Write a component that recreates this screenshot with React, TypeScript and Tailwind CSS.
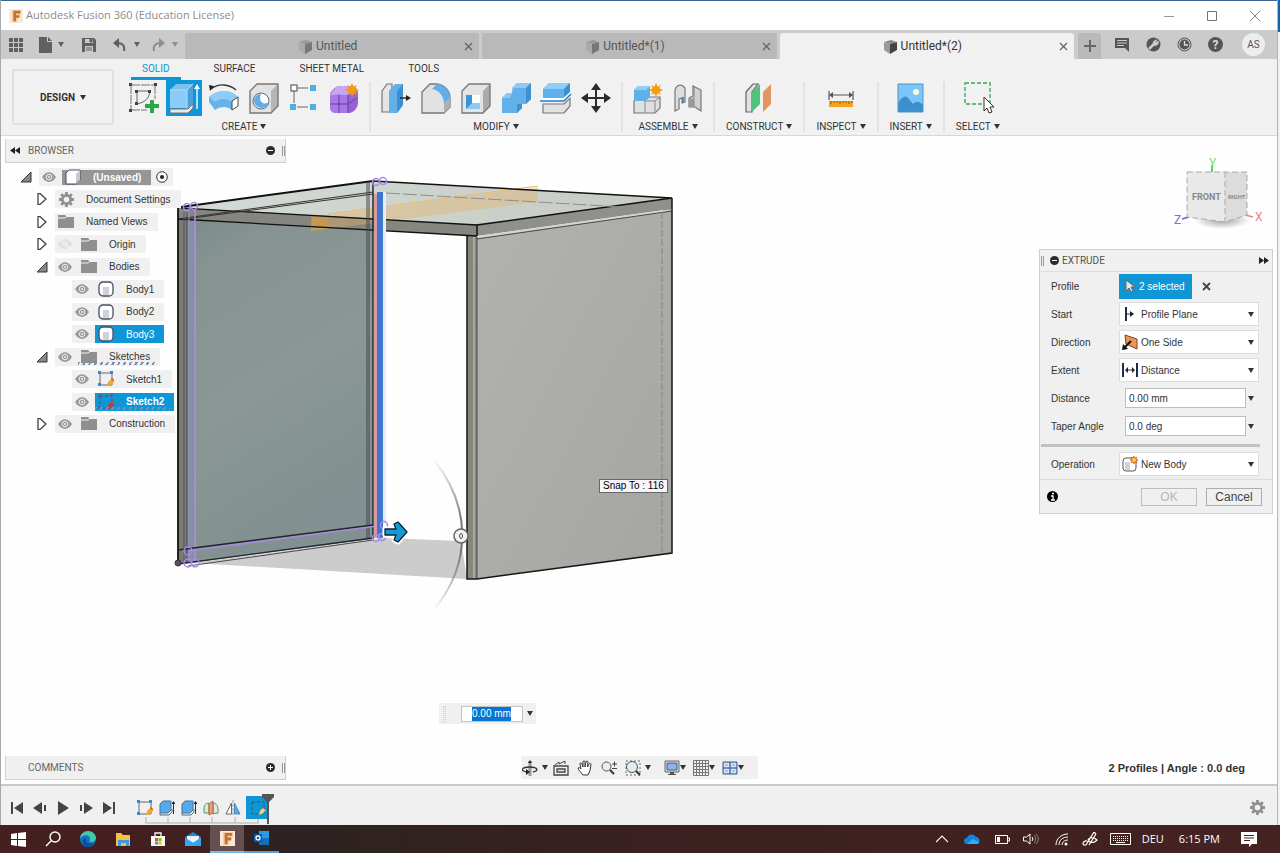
import type { ReactNode } from "react";

type IconProps = { children: ReactNode; w?: number; h?: number; box?: string };

function Icon({ children, w = 32, h = 32, box }: IconProps) {
  return (
    <svg width={w} height={h} viewBox={box ?? `0 0 ${w} ${h}`} fill="none" className="shrink-0" aria-hidden="true">
      {children}
    </svg>
  );
}

function Caret({ color = "#333" }: { color?: string }) {
  return (
    <Icon w={6} h={5}>
      <path d="M0 0h6L3 5z" fill={color} />
    </Icon>
  );
}

/* ---------- ribbon icons ---------- */

const spark = "M0-7 1.7-3.3 5-5 3.3-1.7 7 0 3.3 1.7 5 5 1.7 3.3 0 7-1.7 3.3-5 5-3.3 1.7-7 0-3.3-1.7-5-5-1.7-3.3z";

const SketchIcon = () => (
  <Icon>
    <path d="M3 3h24M3 3v25M27 3v14M3 28h16" stroke="#777" strokeDasharray="9 1" />
    <path d="M9 9h13M9 9v13M9 22c9-2 12-6 13-13" stroke="#666" />
    <path d="M1 1h3v3H1zM26 1h3v3h-3zM1 27h3v3H1zM7 8h3v3H7zM20 8h3v3h-3zM7 20h3v3H7z" fill="#444" />
    <path d="M22 18h4v4h5v4h-5v5h-4v-5h-5v-4h5z" fill="#27a84a" />
  </Icon>
);

const ExtrudeIcon = () => (
  <Icon>
    <path d="M2 8 8 2h17v19l-5 5H2z" fill="#7cc0f2" />
    <path d="M2 8h17v18H2z" fill="#8accf7" />
    <path d="m19 8 6-6v19l-6 5z" fill="#4b9fdd" />
    <path d="M2 8h17v19M19 8l6-6" stroke="#a9dcff" />
    <path d="M2 27h18l5-5v4l-5 5H2z" fill="#e8e8e8" stroke="#777" />
    <path d="M29 27V6" stroke="#e7f6ff" strokeWidth="1.5" />
    <path d="m29 2 3 5h-6z" fill="#fff" />
  </Icon>
);

const RevolveIcon = () => (
  <Icon>
    <path d="M1 15c8-8 22-8 29 0v6l-6 7c-5-4-12-4-17 0l-6-8z" fill="#66b2ea" />
    <path d="M1 15c8-8 22-8 29 0l-6 5c-5-4-12-4-17 0z" fill="#8ecbf5" />
    <path d="m24 19 6-4v9l-6 4z" fill="#fff" stroke="#444" />
    <path d="M3 7C11 1 21 2 28 8" stroke="#333" strokeWidth="1.3" />
    <path d="m1 3 5 1-4 5z" fill="#222" />
  </Icon>
);

const HoleIcon = () => (
  <Icon>
    <path d="M2 9 9 2h21v22l-7 7H2z" fill="#e2e2e2" />
    <path d="m23 9 7-7v22l-7 7z" fill="#b5b5b5" />
    <path d="M2 9 9 2h21v22l-7 7H2z" stroke="#777" strokeWidth="1.4" />
    <circle cx="13" cy="19" r="8" fill="#fff" stroke="#666" />
    <path d="M13 12c-3 7 2 12 8 8-1 8-14 8-15-1 0-4 3-7 7-7z" fill="#5facea" />
  </Icon>
);

const PatternIcon = () => (
  <Icon>
    <path d="M9 6h11M6 9v12M9 25h11" stroke="#666" />
    <rect x="3" y="3" width="6" height="6" fill="#fff" stroke="#444" />
    <path d="M22 3h6v6h-6zM2 22h6v6H2zM22 22h6v6h-6z" fill="#55aae8" />
  </Icon>
);

const FormIcon = () => (
  <Icon>
    <path d="M2 13c0-3 5-9 10-9h11c5 0 7 4 7 9v8c0 5-5 10-9 10H8c-4 0-6-3-6-6z" fill="#9862d6" />
    <path d="M2 14c1-4 6-10 10-10h11c2 0 3 1 3 2-1 3-4 6-6 7z" fill="#c6a5f3" />
    <path d="M2 14c2-2 16-2 18 0v17H8c-4 0-6-3-6-6z" fill="#aa78e6" />
    <path d="M2 22h18l9-6M11 13v18M20 13v18" stroke="#663d9b" />
    <path d={spark} transform="translate(24 8)" fill="#f59b0a" />
  </Icon>
);

const PressPullIcon = () => (
  <Icon>
    <path d="M2 9 7 2h5v28H2z" fill="#e5e5e5" stroke="#777" strokeWidth="1.2" />
    <path d="m9 9 6-7h8v21l-6 8H9z" fill="#61b0ea" />
    <path d="m17 9 6-7v21l-6 8z" fill="#3d8fce" />
    <path d="M20 16h7" stroke="#222" strokeWidth="1.4" />
    <path d="m26 13 5 3-5 3z" fill="#222" />
  </Icon>
);

const FilletIcon = () => (
  <Icon>
    <path d="M2 10 10 2h6c9 1 14 7 14 14v9l-6 6H2z" fill="#e2e2e2" stroke="#777" strokeWidth="1.3" />
    <path d="M24 22v9l6-6v-9z" fill="#b0b0b0" />
    <path d="M12 7 17 2c8 1 13 7 13 14l-6 6c0-8-5-14-12-15z" fill="#60afe9" />
  </Icon>
);

const ShellIcon = () => (
  <Icon>
    <path d="M2 9 9 2h21v22l-7 7H2z" fill="#e4e4e4" />
    <path d="m23 9 7-7v22l-7 7z" fill="#aaa" />
    <path d="M2 9 9 2h21v22l-7 7H2z" stroke="#777" strokeWidth="1.3" />
    <path d="M6 13h14v14H6z" fill="#fff" />
    <path d="M6 13h6v14H6z" fill="#3c93d6" />
    <path d="m6 27 6-6h8v6z" fill="#8bcaf7" />
  </Icon>
);

const CombineIcon = () => (
  <Icon>
    <path d="M2 16 7 11h5V6l5-5h14v16l-5 5h-4v4l-5 5H2z" fill="#62b0e9" />
    <path d="m2 16 5-5h5V6l5-5h14l-5 5H14l-2 5-2 5z" fill="#8bcaf5" />
    <path d="m26 6 5-5v16l-5 5zM17 22h5v4l-5 5z" fill="#3f91d0" />
  </Icon>
);

const SplitIcon = () => (
  <Icon>
    <path d="M3 7 9 1h21v9l-6 6H3z" fill="#60b0ea" />
    <path d="m3 7 6-6h21l-6 6z" fill="#91cef7" />
    <path d="m24 7 6-6v9l-6 6z" fill="#3d8fce" />
    <path d="M3 22h21l6-6v8l-6 7H3z" fill="#e2e2e2" stroke="#777" strokeWidth="1.2" />
    <path d="M0 18h24l7-6" stroke="#fff" strokeWidth="4" />
    <path d="M0 19h24l7-7" stroke="#1681cd" strokeWidth="1.5" />
  </Icon>
);

const MoveIcon = () => (
  <Icon>
    <path d="M16 5v22M5 16h22" stroke="#2b2b2b" strokeWidth="2" />
    <path d="m16 1 5 7H11zM16 31l5-7H11zM1 16l7-5v10zM31 16l-7-5v10z" fill="#2b2b2b" />
  </Icon>
);

const ComponentIcon = () => (
  <Icon>
    <path d="m2 19 4-4h22v11l-5 5H2z" fill="#e0e0e0" stroke="#777" strokeWidth="1.2" />
    <path d="M13 19v12M13 19h10v12M23 19l5-4" stroke="#888" />
    <path d="m2 8 4-4h12v11l-4 4H2z" fill="#5fafe8" />
    <path d="m2 8 4-4h12l-4 4z" fill="#92cef6" />
    <path d={spark} transform="translate(24 8)" fill="#f59b0a" />
  </Icon>
);

const JointIcon = () => (
  <Icon>
    <path d="M3 8c1-4 4-6 8-4l2 2v14l-3 1v-5l-3 1v10l-4 2z" fill="#ddd" stroke="#777" strokeWidth="1.2" />
    <path d="m29 29-6-4h-6v-9l4-2V4l8 4z" fill="#d0d0d0" stroke="#777" strokeWidth="1.2" />
    <path d="m17 16 5 1v8h-5z" fill="#999" />
    <path d="M22 5v20" stroke="#888" />
    <path d="M11 15v5" stroke="#1681cd" strokeWidth="1.5" />
  </Icon>
);

const PlaneIcon = () => (
  <Icon>
    <path d="M3 10 10 2h5l-6 8v20H3z" fill="#e2e2e2" stroke="#666" strokeWidth="1.2" />
    <path d="m9 10 8-8v20l-8 8z" fill="#4fc27c" />
    <path d="m20 10 8-8v20l-8 8z" fill="#e5965f" />
  </Icon>
);

const MeasureIcon = () => (
  <Icon>
    <path d="M4 9v9M28 9v9M5 13h22" stroke="#555" strokeWidth="1.2" />
    <path d="m4 13 4-3v6zM28 13l-4-3v6z" fill="#555" />
    <path d="M4 19h24v6H4z" fill="#f4a51c" />
    <path d="M6 19v3M9 19v2M12 19v2M15 19v3M18 19v2M21 19v2M24 19v3M27 19v2" stroke="#8a5a0a" />
  </Icon>
);

const InsertIcon = () => (
  <Icon>
    <path d="M3 2h25v28H3z" fill="#7bc5fb" />
    <circle cx="21" cy="10" r="3" fill="#fdfce0" />
    <path d="M3 21c4-6 7-9 11-4l4 5c3-3 6-3 10 1v7H3z" fill="#3a8fcc" />
    <path d="M3 2h25v28H3z" stroke="#5295c4" />
  </Icon>
);

const SelectIcon = () => (
  <Icon>
    <path d="M3 1h25v21H3z" stroke="#36a852" strokeWidth="1.3" strokeDasharray="4 2" />
    <path d="M22 15v14l3-3 2 5 3-1-2-5h4z" fill="#fff" stroke="#333" />
  </Icon>
);

const ribbon: { name: string; wide?: boolean; icons: [string, () => ReactNode][] }[] = [
  {
    name: "CREATE",
    icons: [
      ["Create Sketch", SketchIcon],
      ["Extrude", ExtrudeIcon],
      ["Revolve", RevolveIcon],
      ["Hole", HoleIcon],
      ["Pattern", PatternIcon],
      ["Create Form", FormIcon],
    ],
  },
  {
    name: "MODIFY",
    icons: [
      ["Press Pull", PressPullIcon],
      ["Fillet", FilletIcon],
      ["Shell", ShellIcon],
      ["Combine", CombineIcon],
      ["Split Body", SplitIcon],
      ["Move", MoveIcon],
    ],
  },
  { name: "ASSEMBLE", icons: [["New Component", ComponentIcon], ["Joint", JointIcon]] },
  { name: "CONSTRUCT", wide: true, icons: [["Offset Plane", PlaneIcon]] },
  { name: "INSPECT", wide: true, icons: [["Measure", MeasureIcon]] },
  { name: "INSERT", wide: true, icons: [["Insert Image", InsertIcon]] },
  { name: "SELECT", wide: true, icons: [["Select", SelectIcon]] },
];

/* ---------- window chrome ---------- */

function FusionLogo({ size }: { size: number }) {
  return (
    <Icon w={size} h={size} box="0 0 16 16">
      <path d="M0 0h16v16H0z" fill="#fce9da" />
      <path d="M3 1h11v5l-4 4v5H3z" fill="#f7cfa9" />
      <path d="M5 2h8v3H8v2h4v3H8v4H5z" fill="#c4712f" />
    </Icon>
  );
}

function TitleBar() {
  return (
    <header className="flex h-[30px] items-center border-t border-[#3c6491] bg-white pl-2 pr-[17px]">
      <FusionLogo size={14} />
      <h1 className="ml-[3px] font-['Open_Sans',sans-serif] text-[11px] text-[#8b8b8b]">
        Autodesk Fusion 360 (Education License)
      </h1>
      <div className="ml-auto flex items-center gap-[33px]">
        <button aria-label="Minimize">
          <Icon w={10} h={10}><path d="M0 5.5h10" stroke="#999" /></Icon>
        </button>
        <button aria-label="Maximize">
          <Icon w={10} h={10}><path d="M.5.5h9v9h-9z" stroke="#777" /></Icon>
        </button>
        <button aria-label="Close">
          <Icon w={10} h={10}><path d="m0 0 10 10M10 0 0 10" stroke="#888" /></Icon>
        </button>
      </div>
    </header>
  );
}

function DocTab({ name, active }: { name: string; active?: boolean }) {
  const shade = active ? "#444" : "#777";
  return (
    <div
      className={
        active
          ? "flex h-[26px] flex-1 items-center rounded-t-[3px] bg-[#f1f1f1] px-[6px] text-[#333]"
          : "flex h-[26px] flex-1 items-center rounded-t-[3px] bg-[#b9b9b9] px-[6px] text-[#555]"
      }
    >
      <button className="flex flex-1 items-center justify-center gap-[3px] text-[12px]">
        <Icon w={15} h={15}>
          <path d="m1 3 7-2 6 2-7 2z" fill={active ? "#888" : "#999"} />
          <path d="m1 3 6 2v10l-6-4z" fill={active ? "#999" : "#aaa"} />
          <path d="m7 5 7-2v8l-7 4z" fill={shade} />
        </Icon>
        {name}
      </button>
      <button aria-label={`Close ${name}`}>
        <Icon w={9} h={9}><path d="m1 1 7 7M8 1 1 8" stroke="#666" strokeWidth="1.3" /></Icon>
      </button>
    </div>
  );
}

function TabBar() {
  return (
    <nav className="flex h-[29px] items-end bg-[#cbcbcb]">
      <div className="flex h-full w-[184px] shrink-0 items-center pl-2 text-[#606060]">
        <button aria-label="Show data panel">
          <Icon w={14} h={14}>
            <path d="M0 0h4v4H0zM5 0h4v4H5zM10 0h4v4h-4zM0 5h4v4H0zM5 5h4v4H5zM10 5h4v4h-4zM0 10h4v4H0zM5 10h4v4H5zM10 10h4v4h-4z" fill="#606060" />
          </Icon>
        </button>
        <button aria-label="File" className="ml-4 flex items-center gap-[6px]">
          <Icon w={13} h={16}><path d="M0 0h8v5h5v11H0zM9 0l4 4H9z" fill="#606060" /></Icon>
          <Caret color="#606060" />
        </button>
        <button aria-label="Save" className="ml-[18px]">
          <Icon w={14} h={14}>
            <path d="M0 0h12l2 2v12H0z" fill="#606060" />
            <path d="M3 1h8v4H3zM3 8h8v6H3z" fill="#cbcbcb" />
            <path d="M8 1h2v3H8zM4 10h6M4 12h6" fill="#606060" stroke="#606060" />
          </Icon>
        </button>
        <button aria-label="Undo" className="ml-[17px] flex items-center gap-[7px]">
          <Icon w={14} h={14}>
            <path d="M4 5c6 0 8 3 7 8" stroke="#606060" strokeWidth="2" />
            <path d="m0 5 6-5v10z" fill="#606060" />
          </Icon>
          <Caret color="#606060" />
        </button>
        <button aria-label="Redo" className="ml-[11px] flex items-center gap-[7px]">
          <Icon w={14} h={14}>
            <path d="M10 5C4 5 2 8 3 13" stroke="#8f8f8f" strokeWidth="2" />
            <path d="M14 5 8 0v10z" fill="#8f8f8f" />
          </Icon>
          <Caret color="#8f8f8f" />
        </button>
      </div>
      <div className="flex flex-1 gap-[3px]">
        <DocTab name="Untitled" />
        <DocTab name="Untitled*(1)" />
        <DocTab name="Untitled*(2)" active />
      </div>
      <button aria-label="New design" className="ml-1 flex h-[26px] w-[23px] items-center justify-center rounded-t-[3px] bg-[#b9b9b9]">
        <Icon w={12} h={12}><path d="M6 0v12M0 6h12" stroke="#666" strokeWidth="2" /></Icon>
      </button>
      <div className="flex h-full items-center gap-4 pl-[13px] pr-3">
        <button aria-label="Comments">
          <Icon w={16} h={15}>
            <path d="M1 1h14v14l-4-4H1z" fill="#555" />
            <path d="M3 3.5h10M3 6h10M3 8.5h7" stroke="#cbcbcb" />
          </Icon>
        </button>
        <button aria-label="Extensions">
          <Icon w={15} h={15}>
            <circle cx="7.5" cy="7.5" r="7" fill="#555" />
            <path d="m3 12 5-5" stroke="#cbcbcb" strokeWidth="2.5" />
            <path d="M11 3 9 5l1 1 2-2c1 3-1 5-4 4-2-2 0-5 3-5z" fill="#cbcbcb" stroke="#cbcbcb" />
          </Icon>
        </button>
        <button aria-label="Job status">
          <Icon w={15} h={15}>
            <circle cx="7.5" cy="7.5" r="6.5" stroke="#555" />
            <circle cx="7.5" cy="7.5" r="5" fill="#555" />
            <path d="M7.5 4v4H11" stroke="#ddd" strokeWidth="1.3" />
          </Icon>
        </button>
        <button aria-label="Help" className="flex size-[15px] items-center justify-center rounded-full bg-[#555] text-[12px] font-bold leading-none text-[#ddd]">
          ?
        </button>
        <button aria-label="Account" className="ml-[3px] flex size-[23px] items-center justify-center rounded-full bg-[#ededed] text-[10px] text-[#555]">
          AS
        </button>
      </div>
    </nav>
  );
}

function Ribbon() {
  return (
    <section className="flex border-b border-[#d8d8d8] bg-[#f1f1f1] text-[#333]" aria-label="Ribbon">
      <button className="my-[10px] ml-[11px] flex h-[56px] w-[102px] shrink-0 items-center justify-center gap-[5px] rounded-[3px] border-2 border-[#e0e0e0] text-[10px] font-bold">
        DESIGN <Caret />
      </button>
      <div className="ml-[10px] flex flex-col">
        <div className="flex gap-[22px] pl-[7px] text-[10px]">
          <button className="h-[21px] border-b-[3px] border-[#0e96d6] px-[11px] text-[#0e96d6]">SOLID</button>
          <button className="h-[19px] px-[11px]">SURFACE</button>
          <button className="h-[19px] px-[11px]">SHEET METAL</button>
          <button className="h-[19px] px-[11px]">TOOLS</button>
        </div>
        <div className="flex">
          {ribbon.map((group, i) => (
            <div key={group.name} className="flex">
              {i > 0 && <div className="my-[2px] w-[2px] bg-[#e2e2e2]" />}
              <div className={group.wide ? "px-[11px]" : i ? "px-[5px]" : "pr-[5px]"}>
                <div className="flex justify-center">
                  {group.icons.map(([name, Glyph]) => (
                    <div key={name} className="flex w-10 justify-center">
                      <button
                        aria-label={name}
                        className={
                          name === "Extrude"
                            ? "flex size-9 items-center justify-center bg-[#0e96d6]"
                            : "flex size-9 items-center justify-center"
                        }
                      >
                        <Glyph />
                      </button>
                    </div>
                  ))}
                </div>
                <button className="mx-auto mt-[2px] flex h-4 items-center gap-[3px] text-[10px]">
                  {group.name} <Caret />
                </button>
              </div>
            </div>
          ))}
        </div>
      </div>
    </section>
  );
}

/* ---------- model ---------- */

function Model() {
  return (
    <svg className="absolute left-0 top-0" width="700" height="500" viewBox="1 136 700 500" fill="none" role="img" aria-label="Box model">
      <defs>
        <linearGradient id="side" x1="0" y1="0" x2="1" y2="1">
          <stop offset="0" stopColor="#b2b2b0" />
          <stop offset="1" stopColor="#a5a5a1" />
        </linearGradient>
        <linearGradient id="glass" x1="0" y1="0" x2="0.3" y2="1">
          <stop offset="0" stopColor="#77858a" />
          <stop offset="0.2" stopColor="#869392" />
          <stop offset="0.6" stopColor="#8a9794" />
          <stop offset="1" stopColor="#819090" />
        </linearGradient>
        <linearGradient id="top" x1="0" y1="0" x2="1" y2="0">
          <stop offset="0" stopColor="#d3dad5" />
          <stop offset="1" stopColor="#c6cbc3" />
        </linearGradient>
        <linearGradient id="fade" x1="0" y1="0" x2="0" y2="1">
          <stop offset="0" stopColor="#777" stopOpacity="0" />
          <stop offset="0.4" stopColor="#777" />
          <stop offset="0.6" stopColor="#777" />
          <stop offset="1" stopColor="#777" stopOpacity="0" />
        </linearGradient>
      </defs>

      {/* ground shadow */}
      <path d="m193 563 190-25 78 3 6 38z" fill="#ccc" />

      {/* left panel */}
      <path d="M188 217 373 192v347l-185 24z" fill="url(#glass)" />
      <path d="M178 209h9v354h-9z" fill="#7b7a73" />
      <path d="M187 209h9v353h-9z" fill="#8490a0" />

      {/* top plate */}
      <path d="m181 207 192-26 299 17-195 27z" fill="url(#top)" />
      <path d="m178 208 299 17v11l-299-17z" fill="#868681" />
      <path d="m477 225 195-27v11l-195 27z" fill="#8f908c" />
      <path d="m312 217 226-30v15l-210 27-17 2z" fill="#e6b266" fillOpacity="0.4" />
      <path d="M311 216h17v13l-17 2z" fill="#d39a3c" fillOpacity="0.6" />
      <path d="m328 214 210-28" stroke="#edb968" />

      {/* right panel */}
      <path d="m477 237 195-28v344l-195 26z" fill="url(#side)" />
      <path d="M467 236h10v343h-10z" fill="#87867d" />
      <path d="M474 237v342" stroke="#aaa99f" strokeWidth="2" />
      <path d="m478 237 193-27" stroke="#d4d4d2" strokeWidth="2" />
      <path d="m477 239 195-28M477 237v342" stroke="#4b4b4b" />
      <path d="M662 212v340" stroke="#858585" strokeDasharray="7 2" />
      <path d="M467 236v343h10l195-26V198" stroke="#161616" strokeWidth="1.5" />

      {/* plate edges */}
      <path d="m181 207 192-26" stroke="#111" strokeWidth="2" />
      <path d="m373 181 299 17-195 27v11" stroke="#111" strokeWidth="1.5" />
      <path d="m181 208 296 17M178 219l299 17" stroke="#111" strokeWidth="1.3" />
      <path d="m185 219 188-25M178 219l195-27" stroke="#333" />
      <path d="m386 193 286 17" stroke="#8b908c" strokeDasharray="14 3" />

      {/* panel edges */}
      <path d="M178 208v355" stroke="#111" strokeWidth="1.8" />
      <path d="M184 212v350" stroke="#5b5b56" />
      <path d="M187 212v350" stroke="#4a4468" />
      <path d="M189 208v355" stroke="#9a8fc0" />
      <path d="M195 210v353" stroke="#ab8fe0" strokeWidth="1.5" />
      <path d="M367 182v357M369 182v357" stroke="#3f484b" />
      <path d="M373 181v358" stroke="#2a2a2a" strokeWidth="1.5" />
      <path d="m178 550 195-25M178 564l195-26" stroke="#22252c" strokeWidth="1.3" />
      <path d="m188 566 185-26" stroke="#4a4a58" />
      <path d="m188 551 190-25" stroke="#a58be0" strokeWidth="1.5" />

      {/* picked profiles */}
      <path d="M384 192v332" stroke="#e6edf7" strokeWidth="4" />
      <path d="M374 194h4v344h-4z" fill="#d69aa4" />
      <path d="M377 192h6v346h-6z" fill="#3f76cc" />
      <g stroke="#a88ae6" strokeWidth="1.5">
        <circle cx="376" cy="182" r="3.5" />
        <circle cx="383" cy="181" r="3.5" />
        <circle cx="187" cy="207" r="3.5" />
        <circle cx="194" cy="206" r="3.5" />
        <circle cx="188" cy="551" r="4" />
        <circle cx="188" cy="563" r="4" />
        <circle cx="195" cy="563" r="4" />
        <circle cx="376" cy="538" r="3.5" />
        <circle cx="384" cy="525" r="3.5" />
        <circle cx="382" cy="537" r="3.5" />
      </g>
      <circle cx="178" cy="563" r="3" fill="#555" stroke="#3d2c58" />

      {/* manipulators */}
      <path d="M433 459c38 46 40 104 0 152" stroke="url(#fade)" strokeWidth="2" />
      <circle cx="461" cy="536" r="7" fill="#f1f1f1" stroke="#666" strokeWidth="1.5" />
      <ellipse cx="461" cy="536" rx="1.5" ry="2.5" stroke="#555" />
      <path d="M385 529h11l-2-5 4-2 9 10-9 10-4-2 2-5h-11z" stroke="#fff" strokeWidth="5" strokeLinejoin="round" />
      <path d="M385 529h11l-2-5 4-2 9 10-9 10-4-2 2-5h-11z" fill="#139bd6" stroke="#123" strokeWidth="1.3" strokeLinejoin="round" />
    </svg>
  );
}

function ViewCube() {
  return (
    <svg width="94" height="80" viewBox="1170 153 94 80" className="mr-[9px] mt-[17px] self-end" role="img" aria-label="View cube" fontFamily="Roboto, sans-serif">
      <defs>
        <radialGradient id="cubeShadow">
          <stop offset="0" stopColor="#777" stopOpacity="0.7" />
          <stop offset="1" stopColor="#777" stopOpacity="0" />
        </radialGradient>
      </defs>
      <ellipse cx="1222" cy="220" rx="28" ry="9" fill="url(#cubeShadow)" />
      <path d="M1212 165v8" stroke="#4be04b" strokeWidth="2" />
      <path d="m1182 219 7-2" stroke="#6262dd" strokeWidth="1.5" />
      <path d="m1245 215 8 2" stroke="#ef7d7d" strokeWidth="1.5" />
      <path d="M1187 172h38v50l-38-5z" fill="#e9e9e9" />
      <path d="M1225 172h22v43l-22 7z" fill="#dcdcdc" />
      <path d="M1187 172h60v43l-22 7-38-5zM1225 172v50" fill="none" stroke="#aaa" strokeDasharray="6 3" />
      <g fontWeight="bold" fill="#888">
        <text x="1192" y="200" fontSize="9">FRONT</text>
        <text x="1228" y="199" fontSize="6">RIGHT</text>
      </g>
      <text x="1209" y="167" fontSize="12" fill="#6fe56f">Y</text>
      <text x="1174" y="224" fontSize="12" fill="#7474e6">Z</text>
      <text x="1255" y="221" fontSize="12" fill="#f28080">X</text>
    </svg>
  );
}

/* ---------- browser tree ---------- */

const Folder = () => (
  <Icon w={16} h={13}>
    <path d="M0 0h7l2 2h7v11H0z" fill="#8f8f8f" />
    <path d="M0 3h7l2-1.5" stroke="#f0f0f0" />
  </Icon>
);

const gearPath =
  "M6.5 0h3v2.3l1.6.7 1.6-1.7 2 2-1.6 1.7.6 1.5H16v3h-2.3l-.6 1.6 1.6 1.6-2 2-1.6-1.6-1.6.6V16h-3v-2.3l-1.6-.6-1.6 1.6-2-2 1.6-1.6-.6-1.6H0v-3h2.3L2.9 5 1.3 3.3l2-2L4.9 3l1.6-.7zM8 5a3 3 0 1 0 0 6 3 3 0 0 0 0-6z";

const Gear = () => (
  <Icon w={15} h={15} box="0 0 16 16">
    <path d={gearPath} fill="#8f8f8f" fillRule="evenodd" />
  </Icon>
);

const BodyIcon = () => (
  <Icon w={16} h={16}>
    <rect x="1" y="1" width="14" height="14" rx="4" fill="#fff" stroke="#4a4d60" strokeWidth="1.3" />
    <path d="M5 6h6v8H5z" fill="#cfd2da" />
  </Icon>
);

const CubeIcon = () => (
  <Icon w={16} h={16}>
    <path d="m1 4 3-3h11v10l-4 4H1z" fill="#fff" stroke="#4a4d60" />
    <path d="m11 5 4-4v10l-4 4z" fill="#c5c8d0" />
  </Icon>
);

const SketchSmall = ({ active }: { active?: boolean }) => (
  <Icon w={16} h={16}>
    <path d="M2 2h12v12H2z" stroke={active ? "#33536e" : "#666"} strokeDasharray={active ? "3 2" : undefined} />
    <path d="M0 0h3v3H0zM12 0h3v3h-3zM0 12h3v3H0z" fill={active ? "#3d6d96" : "#2d8bd8"} />
    <path d="m9 15 1-4 4-4 3 3-4 4z" fill={active ? "#c23a45" : "#f0a733"} />
    <path d="m13 8 1-1 2 2-1 1z" fill="#e0492f" />
  </Icon>
);

const SketchSelected = () => (
  <Icon w={16} h={16}>
    <path d="M2 2h12v12H2z" stroke="#35566f" strokeDasharray="3 2" />
    <path d="m9 15 1-4 3-3 3 2-4 4z" fill="#f3d38c" />
    <path d="m13 8 1-1 2 2-1 1z" fill="#b9536a" />
  </Icon>
);

function Eye({ off }: { off?: boolean }) {
  const c = off ? "#ddd" : "#9a9a9a";
  return (
    <Icon w={14} h={10}>
      <path d="M0 5c4-6.5 10-6.5 14 0-4 6.5-10 6.5-14 0z" fill={c} />
      <circle cx="7" cy="5" r="2.8" fill={c} stroke="#f0f0f0" />
      <circle cx="7" cy="5" r="1" fill="#f0f0f0" />
      {off && <path d="m1 0 12 10" stroke="#f0f0f0" strokeWidth="2" />}
    </Icon>
  );
}

type Node = {
  label: string;
  level: 0 | 1 | 2;
  open?: boolean;
  eye?: "on" | "off";
  icon: ReactNode;
  look?: "root" | "picked" | "editing" | "hatched";
};

const nodes: Node[] = [
  { label: "(Unsaved)", level: 0, open: true, eye: "on", icon: <CubeIcon />, look: "root" },
  { label: "Document Settings", level: 1, open: false, icon: <Gear /> },
  { label: "Named Views", level: 1, open: false, icon: <Folder /> },
  { label: "Origin", level: 1, open: false, eye: "off", icon: <Folder /> },
  { label: "Bodies", level: 1, open: true, eye: "on", icon: <Folder /> },
  { label: "Body1", level: 2, eye: "on", icon: <BodyIcon /> },
  { label: "Body2", level: 2, eye: "on", icon: <BodyIcon /> },
  { label: "Body3", level: 2, eye: "on", icon: <BodyIcon />, look: "picked" },
  { label: "Sketches", level: 1, open: true, eye: "on", icon: <Folder />, look: "hatched" },
  { label: "Sketch1", level: 2, eye: "on", icon: <SketchSmall /> },
  { label: "Sketch2", level: 2, eye: "on", icon: <SketchSmall active />, look: "editing" },
  { label: "Construction", level: 1, open: false, eye: "on", icon: <Folder /> },
];

const indents = ["pl-2", "pl-6", "pl-[41px]"];

const looks = {
  root: "h-[15px] bg-[#959595] font-bold text-white",
  picked: "h-[18px] bg-[#0e96d6] text-white",
  editing: "h-[18px] bg-[#0e96d6] font-bold text-white",
  hatched: "h-[18px]",
  plain: "h-[18px]",
};

function TreeRow({ node }: { node: Node }) {
  const hatched = node.look === "hatched" || node.look === "editing";
  return (
    <li className={`flex h-[18px] items-center ${indents[node.level]}`}>
      <div className="flex w-[26px] justify-center">
        {node.open !== undefined && (
          <button aria-label={`Toggle ${node.label}`}>
            <Icon w={12} h={12}>
              {node.open ? (
                <path d="M11 1v10H1z" fill="#888" stroke="#333" />
              ) : (
                <path d="M2 .5h2L10 6l-6 5.500H2z" fill="#fff" stroke="#444" strokeWidth="1.3" />
              )}
            </Icon>
          </button>
        )}
      </div>
      <div className="flex h-[18px] items-center bg-[#f0f0f0]">
        {node.eye && (
          <button aria-label={`Visibility of ${node.label}`} className="flex w-[23px] justify-center pr-[3px]">
            <Eye off={node.eye === "off"} />
          </button>
        )}
        <div className={`relative flex items-center pr-[10px] ${looks[node.look ?? "plain"]}`}>
          <span className="mr-[9px] flex w-[22px] justify-center">{node.icon}</span>
          {node.label}
          {hatched && (
            <span className="absolute bottom-px left-0 right-1 h-[3px] bg-[repeating-linear-gradient(120deg,#7d8fae_0px,#7d8fae_2px,transparent_2px,transparent_5px)]" />
          )}
        </div>
        {node.look === "root" && (
          <button aria-label="Activate component" className="px-[5px]">
            <Icon w={12} h={12}>
              <circle cx="6" cy="6" r="5.3" fill="#fff" stroke="#333" />
              <circle cx="6" cy="6" r="2" fill="#222" />
            </Icon>
          </button>
        )}
      </div>
    </li>
  );
}

function RoundToggle({ plus }: { plus?: boolean }) {
  return (
    <Icon w={9} h={9}>
      <circle cx="4.5" cy="4.5" r="4.5" fill="#2b2b2b" />
      <path d={plus ? "M2 4.5h5M4.5 2v5" : "M2 4.5h5"} stroke="#fff" />
    </Icon>
  );
}

const Grip = () => <span className="h-2.5 w-[3px] border-x border-[#999]" />;

function BrowserPanel() {
  return (
    <aside className="relative w-[281px] text-[10px] text-[#333]">
      <div className="mt-[3px] flex h-6 items-center border border-t-0 border-[#cfcfcf] bg-[#f0f0f0] pl-[4px] font-[Roboto,sans-serif] text-[#666]">
        <button aria-label="Collapse browser">
          <Icon w={10} h={7}><path d="M5 0v7L0 3.5zM10 0v7L5 3.5z" fill="#222" /></Icon>
        </button>
        <h2 className="ml-2">BROWSER</h2>
        <button aria-label="Hide browser" className="ml-auto mr-[7px]"><RoundToggle /></button>
        <Grip />
      </div>
      <ul className="mt-[5px] flex h-[265px] flex-col justify-between">
        {nodes.map((n) => (
          <TreeRow key={n.label} node={n} />
        ))}
      </ul>
    </aside>
  );
}

/* ---------- extrude dialog ---------- */

const StartIcon = () => (
  <Icon w={16} h={16}>
    <path d="M4 1v14" stroke="#1c2b50" strokeWidth="2" />
    <path d="M5 8h5" stroke="#333" />
    <path d="m8 5 4 3-4 3z" fill="#222" />
  </Icon>
);

const DirectionIcon = () => (
  <Icon w={16} h={16}>
    <path d="m3 1 12 4v10L4 10z" fill="#ee9455" stroke="#7c4724" />
    <path d="m2 14 7-7" stroke="#111" strokeWidth="2" />
    <path d="m0 16 1-6 5 5z" fill="#111" />
  </Icon>
);

const ExtentIcon = () => (
  <Icon w={16} h={16}>
    <path d="M1 1v14M15 1v14" stroke="#1c2b50" strokeWidth="2" />
    <path d="M4 8h8" stroke="#333" />
    <path d="m3 8 3-3v6zM13 8l-3-3v6z" fill="#222" />
  </Icon>
);

const NewBodyIcon = () => (
  <Icon w={16} h={16}>
    <rect x="1" y="2" width="13" height="13" rx="3" fill="#fff" stroke="#555" />
    <path d="M3 6h5v8H3z" fill="#cfd2da" />
    <path d={spark} transform="translate(12 4) scale(.55)" fill="#ffd24a" stroke="#d4541c" strokeWidth="1.5" />
  </Icon>
);

function SelectRow({ id, label, icon, options }: { id: string; label: string; icon: ReactNode; options: string[] }) {
  return (
    <div className="flex h-7 items-center pl-[11px] pr-[13px]">
      <label htmlFor={id} className="w-[68px]">{label}</label>
      <div className="relative flex h-6 flex-1 items-center border border-[#dcdcdc] bg-white pl-[2px]">
        {icon}
        <select id={id} className="h-full flex-1 appearance-none bg-transparent pl-[3px] text-[10px]">
          {options.map((o) => (
            <option key={o}>{o}</option>
          ))}
        </select>
        <span className="pointer-events-none absolute right-1"><Caret /></span>
      </div>
    </div>
  );
}

function ValueRow({ id, label, value }: { id: string; label: string; value: string }) {
  return (
    <div className="flex h-7 items-center pl-[11px] pr-[18px]">
      <label htmlFor={id} className="w-[74px]">{label}</label>
      <input id={id} defaultValue={value} className="mr-[2px] h-5 w-0 flex-1 border border-[#bdbdbd] bg-white px-[3px] text-[10px]" />
      <Caret />
    </div>
  );
}

function ExtrudeDialog() {
  return (
    <section className="mt-4 border border-[#cfcfcf] bg-[#f0f0f0] text-[10px] text-[#333]" aria-label="Extrude">
      <div className="flex h-[22px] items-center border-b border-[#dcdcdc] pl-px pr-[3px] font-[Roboto,sans-serif]">
        <Grip />
        <button aria-label="Collapse dialog" className="ml-[6px]"><RoundToggle /></button>
        <h2 className="ml-[3px] text-[#555]">EXTRUDE</h2>
        <button aria-label="Expand dialog" className="ml-auto">
          <Icon w={10} h={7}><path d="M0 0v7l5-3.500zM5 0v7l5-3.500z" fill="#222" /></Icon>
        </button>
      </div>
      <div className="flex h-7 items-center pl-[11px]">
        <span className="w-[68px]">Profile</span>
        <button className="flex h-[25px] w-[73px] items-center gap-[3px] bg-[#0e96d6] pl-[6px] text-white">
          <Icon w={11} h={14}>
            <path d="M1 1v11l3-3 2 4 2-1-2-4h4z" fill="#e8e8e8" stroke="#666" />
          </Icon>
          2 selected
        </button>
        <button aria-label="Clear selection" className="ml-[10px]">
          <Icon w={9} h={9}><path d="m1 1 7 7M8 1 1 8" stroke="#444" strokeWidth="1.8" /></Icon>
        </button>
      </div>
      <SelectRow id="start" label="Start" icon={<StartIcon />} options={["Profile Plane", "Offset Plane"]} />
      <SelectRow id="direction" label="Direction" icon={<DirectionIcon />} options={["One Side", "Two Sides"]} />
      <SelectRow id="extent" label="Extent" icon={<ExtentIcon />} options={["Distance", "All"]} />
      <ValueRow id="distance" label="Distance" value="0.00 mm" />
      <ValueRow id="taper" label="Taper Angle" value="0.0 deg" />
      <div className="mb-[3px] ml-px mr-3 mt-1 h-[3px] bg-[#c2c2c2]" />
      <SelectRow id="operation" label="Operation" icon={<NewBodyIcon />} options={["New Body", "Join", "Cut"]} />
      <div className="mt-px flex h-[34px] items-center border-t border-[#dcdcdc] pl-[7px] pr-[10px]">
        <button aria-label="Info">
          <Icon w={11} h={11}>
            <circle cx="5.5" cy="5.5" r="5.5" fill="#000" />
            <path d="M4 5h2v4M4 9h4M5 2.500h2" stroke="#fff" strokeWidth="1.3" />
          </Icon>
        </button>
        <button disabled className="ml-auto h-[18px] w-14 border border-[#bdbdbd] text-[12px] leading-none text-[#b5b5b5]">OK</button>
        <button className="ml-[9px] h-[18px] w-14 border border-[#adadad] text-[12px] leading-none text-[#444]">Cancel</button>
      </div>
    </section>
  );
}

/* ---------- canvas footer ---------- */

const OrbitIcon = () => (
  <Icon w={16} h={16}>
    <path d="M8 1v15" stroke="#999" strokeWidth="3" />
    <path d="M11 12c6-1 5-5-3-5S-3 11 5 12" stroke="#333" strokeWidth="1.3" />
    <path d="m4 9 4 3-4 3zM8 0l2 3H6z" fill="#222" />
  </Icon>
);

const LookAtIcon = () => (
  <Icon w={16} h={16}>
    <path d="M1 6h14v9H1zM4 9h8v3H4z" stroke="#444" strokeWidth="1.3" />
    <path d="m2 5 4-3v2l6-3v3" stroke="#444" />
  </Icon>
);

const PanIcon = () => (
  <Icon w={16} h={16}>
    <path d="M5 14c-1-2-4-4-4-6 1-1 2 0 3 1L3 4c0-1.500 1.500-1.500 2 0l1 3V2c0-1.500 2-1.500 2 0v5l1-5c0-1.500 2-1 2 0l-.5 5L12 4c1-1.500 2-.5 2 .5l-1 6-2 4.500H6z" fill="#fff" stroke="#333" />
  </Icon>
);

const ZoomIcon = () => (
  <Icon w={16} h={16}>
    <circle cx="5.5" cy="6.5" r="4.5" fill="#e6eef3" stroke="#555" />
    <path d="m9 10 4 4" stroke="#333" strokeWidth="2" />
    <path d="M11 4h5M13.500 1.500v5M11 8.500h5" stroke="#444" />
  </Icon>
);

const FitIcon = () => (
  <Icon w={16} h={16}>
    <path d="M1 1h14v14H1z" stroke="#666" strokeDasharray="2 2" />
    <circle cx="7" cy="7" r="5.5" fill="#e0ebf1" stroke="#555" />
    <path d="m11 11 4 4" stroke="#333" strokeWidth="2" />
  </Icon>
);

const DisplayIcon = () => (
  <Icon w={16} h={16}>
    <path d="M1 1h14v11H1z" fill="#dde3ea" stroke="#666" />
    <path d="M3 3h10v7H3z" fill="#8fb2df" stroke="#3c5f91" />
    <path d="M6 12h4v2h2v1H4v-1h2z" fill="#555" />
  </Icon>
);

const GridIcon = () => (
  <Icon w={16} h={16}>
    <path d="M.5.5h15v15H.5zM3.500 0v16M6.500 0v16M9.500 0v16M12.500 0v16M0 3.500h16M0 6.500h16M0 9.500h16M0 12.500h16" stroke="#777" />
  </Icon>
);

const ViewportIcon = () => (
  <Icon w={16} h={16}>
    <path d="M1 2h14v12H1z" fill="#a9c1e6" stroke="#3f5c8c" />
    <path d="M8 2v12M1 8h14" stroke="#3f5c8c" />
    <path d="M2.500 3.500h4v3h-4zM9.500 3.500h4v3h-4zM2.500 9.500h4v3h-4zM9.500 9.500h4v3h-4z" stroke="#dbe6f6" />
  </Icon>
);

function CanvasFooter() {
  return (
    <div className="relative grid grid-cols-[1fr_auto_1fr] items-start">
      <div className="flex h-6 w-[281px] items-center border border-t-0 border-[#cfcfcf] bg-[#f0f0f0] pl-[22px] font-[Roboto,sans-serif] text-[10px] text-[#666]">
        <h2>COMMENTS</h2>
        <button aria-label="Show comments" className="ml-auto mr-[7px]"><RoundToggle plus /></button>
        <Grip />
      </div>
      <div className="flex h-[23px] w-[237px] items-center bg-[#f0f0f0] pl-px">
        <button aria-label="Orbit" className="flex items-center gap-[4px]"><OrbitIcon /><Caret /></button>
        <button aria-label="Look at" className="ml-[5px]"><LookAtIcon /></button>
        <button aria-label="Pan" className="ml-2"><PanIcon /></button>
        <button aria-label="Zoom" className="ml-2"><ZoomIcon /></button>
        <button aria-label="Fit" className="ml-2 flex items-center gap-1"><FitIcon /><Caret /></button>
        <button aria-label="Display settings" className="ml-[13px] flex items-center"><DisplayIcon /><Caret /></button>
        <button aria-label="Grid and snaps" className="ml-[7px] flex items-center"><GridIcon /><Caret /></button>
        <button aria-label="Viewports" className="ml-[7px] flex items-center"><ViewportIcon /><Caret /></button>
      </div>
      <p className="self-center justify-self-end pr-[28px] text-[11px] font-bold text-[#333]">2 Profiles | Angle : 0.0 deg</p>
    </div>
  );
}

function Canvas() {
  return (
    <main className="relative flex flex-1 flex-col bg-[#fefefe] px-1 pb-[4px] font-['Liberation_Sans',Arial,sans-serif]">
      <Model />
      <div className="absolute left-[598px] top-[343px] border border-[#666] bg-[#f6f6fa] px-[3px] text-[10px] leading-3 text-black">
        Snap To : 116
      </div>
      <div className="absolute left-[438px] top-[567px] flex h-[21px] w-[97px] items-center bg-[#f0f0f0]">
        <span className="ml-1 h-4 w-[3px] border-x border-dotted border-[#ccc]" />
        <input
          aria-label="Distance value"
          defaultValue="0.00 mm"
          className="ml-[15px] h-4 w-[62px] border border-[#c4c4c4] bg-white bg-[linear-gradient(#0a74d1,#0a74d1)] bg-[length:39px_14px] bg-[position:10px_0px] bg-no-repeat pl-[10px] text-[10px] text-white"
        />
        <span className="ml-[4px]"><Caret /></span>
      </div>
      <div className="flex flex-1 justify-between">
        <BrowserPanel />
        <div className="flex w-[234px] flex-col">
          <ViewCube />
          <ExtrudeDialog />
        </div>
      </div>
      <CanvasFooter />
    </main>
  );
}

/* ---------- timeline ---------- */

const playback: [string, string][] = [
  ["Go to start", "M1 1h2v12H1zM13 1v12L4 7z"],
  ["Step back", "M9 1v12L0 7zM11 4h2v6h-2z"],
  ["Play", "M2 0v14l11-7z"],
  ["Step forward", "M5 1v12l9-6zM1 4h2v6H1z"],
  ["Go to end", "M11 1h2v12h-2zM1 1v12l9-6z"],
];

const ExtrudeSmall = () => (
  <Icon w={16} h={16}>
    <path d="m1 4 3-3h8v9l-3 3H1z" fill="#59a9e6" stroke="#3278b5" />
    <path d="M1 13v2h9l3-3V9" stroke="#666" />
    <path d="M14.500 14V3" stroke="#333" />
    <path d="m14.500 1 2 3h-4z" fill="#222" />
  </Icon>
);

const RevolveSmall = () => (
  <Icon w={16} h={16}>
    <path d="M1 13V8c0-3 2-5 5-5v10z" fill="#dbe9dd" stroke="#4f9d6a" />
    <path d="M10 14V3c3 0 5 3 5 6v4z" fill="#dbe9dd" stroke="#4f9d6a" />
    <path d="m6 4 4-3v12l-4 2z" fill="#e8a078" stroke="#b75f3e" />
  </Icon>
);

const MirrorSmall = () => (
  <Icon w={16} h={16}>
    <path d="M6.500 3v11H1z" fill="#fff" stroke="#666" />
    <path d="M9.500 3v11H15z" fill="#5aa8e2" stroke="#4a90c8" />
    <path d="M8 0v16" stroke="#999" strokeDasharray="3 1" />
  </Icon>
);

function Timeline() {
  return (
    <section className="flex h-[41px] items-start border-t-2 border-[#c9c9c9] bg-[#f0f0f0] pl-[9px] pr-3" aria-label="Timeline">
      <div className="mt-[15px] flex gap-[9px]">
        {playback.map(([name, d]) => (
          <button key={name} aria-label={name}>
            <Icon w={14} h={14}><path d={d} fill="#444" /></Icon>
          </button>
        ))}
      </div>
      <div className="relative ml-[18px] mt-[10px] flex">
        <svg width="140" height="30" className="absolute left-0 top-0" fill="none" aria-hidden="true">
          <path d="M12 21v6h112v-6M34 21v6M56 21v6M78 21v6M101 21v6" stroke="#c2c2c2" strokeWidth="1.5" />
        </svg>
        <button aria-label="Sketch1 feature" className="relative flex h-[23px] w-[22px] items-center justify-center"><SketchSmall /></button>
        <button aria-label="Extrude1 feature" className="relative flex h-[23px] w-[22px] items-center justify-center"><ExtrudeSmall /></button>
        <button aria-label="Extrude2 feature" className="relative flex h-[23px] w-[22px] items-center justify-center"><ExtrudeSmall /></button>
        <button aria-label="Plane feature" className="relative flex h-[23px] w-[22px] items-center justify-center"><RevolveSmall /></button>
        <button aria-label="Mirror feature" className="relative flex h-[23px] w-[22px] items-center justify-center"><MirrorSmall /></button>
        <button aria-label="Sketch2 feature" className="relative ml-[2px] flex h-[23px] w-[23px] items-center justify-center bg-[#0e96d6]"><SketchSelected /></button>
        <svg width="12" height="30" className="absolute left-[128px] top-[-2px]" fill="#555" aria-hidden="true">
          <path d="M0 0h12v3L7 8v22H5V8L0 3z" />
        </svg>
      </div>
      <button aria-label="Timeline settings" className="ml-auto mt-[14px]"><Gear /></button>
    </section>
  );
}

/* ---------- taskbar ---------- */

const apps: { name: string; art: ReactNode; state?: "active" | "running" }[] = [
  { name: "Start", art: <path d="M1 3l6-1v6H1zM8 2l8-1v7H8zM1 9h6v6l-6-1zM8 9h8v7l-8-1z" fill="#fff" /> },
  {
    name: "Search",
    art: <path d="M15 6a5 5 0 1 1-10 0 5 5 0 0 1 10 0zM6.500 9.500 1 15" stroke="#fff" strokeWidth="1.4" />,
  },
  {
    name: "Edge",
    art: (
      <>
        <circle cx="8" cy="8" r="8" fill="#1472c4" />
        <path d="M0 8C0 3 4 0 8 0c5 0 8 4 8 7 0 2-2 4-5 4-2 0-1-2-1-3 0-6-9-4-10 0z" fill="#42c9a5" />
        <path d="M6 9c0 3 4 5 8 3-2 4-8 5-11 1-1-3 0-6 3-6z" fill="#0b4f98" />
      </>
    ),
  },
  {
    name: "File Explorer",
    art: (
      <>
        <path d="M1 2h5l2 2h7v11H1z" fill="#f4c04a" />
        <path d="M3 9h11v6H3z" fill="#3b9be0" />
        <path d="M6 12h5v3H6z" fill="#f4c04a" />
      </>
    ),
  },
  {
    name: "Store",
    art: (
      <>
        <path d="M1 5h14v10H1z" fill="#f7f7f7" />
        <path d="M5 5V2h6v3" stroke="#f7f7f7" strokeWidth="1.3" />
        <path d="M5 7h3v3H5z" fill="#e5512a" />
        <path d="M8.500 7h3v3h-3z" fill="#7eb82b" />
        <path d="M5 10.500h3v3H5z" fill="#2a9fe4" />
        <path d="M8.500 10.500h3v3h-3z" fill="#f7b91b" />
      </>
    ),
  },
  {
    name: "Mail",
    art: (
      <>
        <path d="m0 6 8-5 8 5v9H0z" fill="#1c86d8" />
        <path d="M2 5h12v3l-6 4-6-4z" fill="#e8f4fc" />
        <path d="m0 7 8 5 8-5v8H0z" fill="#36a6ee" />
      </>
    ),
  },
  { name: "Fusion 360", art: null, state: "active" },
  {
    name: "Outlook",
    art: (
      <>
        <path d="M5 1h10v14H5z" fill="#2b9be4" />
        <path d="M5 8h10v7H5z" fill="#1271bd" />
        <path d="M0 4h8v8H0z" fill="#0a5cab" />
        <circle cx="4" cy="8" r="2" stroke="#fff" strokeWidth="1.3" />
      </>
    ),
    state: "running",
  },
];

function Taskbar() {
  return (
    <footer className="flex h-7 items-center bg-[linear-gradient(90deg,#45201f_0%,#42201f_15%,#2c2322_22%,#3a2020_50%,#452321_100%)] font-['Open_Sans',sans-serif] text-[11px] text-white">
      <div className="flex h-full">
        {apps.map((app) => (
          <button
            key={app.name}
            aria-label={app.name}
            className={
              app.state === "active"
                ? "flex h-full w-[34px] items-center justify-center border-b-2 border-[#76b9ed] bg-[#65504f]"
                : app.state === "running"
                  ? "flex h-full w-[35px] items-center justify-center border-b-2 border-[#5d9bd0]"
                  : "flex h-full w-[35px] items-center justify-center"
            }
          >
            {app.art ? <Icon w={16} h={16}>{app.art}</Icon> : <FusionLogo size={15} />}
          </button>
        ))}
      </div>
      <div className="ml-auto flex items-center pr-[23px]">
        <button aria-label="Show hidden icons">
          <Icon w={12} h={8}><path d="m0 7 6-6 6 6" stroke="#fff" strokeWidth="1.2" /></Icon>
        </button>
        <button aria-label="OneDrive" className="ml-4">
          <Icon w={16} h={10}>
            <path d="M3 10a3 3 0 0 1 0-6c1-4 7-5 9-1 4 0 5 6 1 7z" fill="#1384dd" />
            <path d="m3 10 6-5 6 3c0 1-1 2-2 2z" fill="#3aa7f2" />
          </Icon>
        </button>
        <button aria-label="Battery" className="ml-[15px]">
          <Icon w={15} h={9}>
            <path d="M.5.5h12v8H.5zM13 3h1.500v3H13" stroke="#fff" />
            <path d="M2 2h3v5H2z" fill="#fff" />
          </Icon>
        </button>
        <button aria-label="Volume" className="ml-[13px]">
          <Icon w={16} h={12}>
            <path d="M.5 4h3L7 1v10L3.500 8h-3z" stroke="#fff" />
            <path d="M9 4c1 1 1 3 0 4" stroke="#fff" />
            <path d="M11 2c2 2 2 6 0 8M13 1c3 3 3 7 0 10" stroke="#9a8383" />
          </Icon>
        </button>
        <button aria-label="Network" className="ml-4">
          <Icon w={14} h={13}>
            <path d="M1 12C1 6 6 1 13 1M4 12c0-5 4-8 9-8M7 12c0-3 3-5 6-5" stroke="#fff" />
            <circle cx="11" cy="11" r="1.5" fill="#fff" />
          </Icon>
        </button>
        <button aria-label="Pen" className="ml-[13px]">
          <Icon w={16} h={15}>
            <path d="m12 0-8 13M14 2 7 13M4 13c-5 1-3-5 1-4 5 1 6 3 10-1-3-3-8-3-9 0M12 0l2 2" stroke="#fff" strokeWidth="1.2" />
          </Icon>
        </button>
        <button aria-label="Touch keyboard" className="ml-3">
          <Icon w={21} h={12}>
            <path d="M.5.5h20v11H.5z" stroke="#fff" />
            <path d="M3 3.500h15M3 5.500h15M3 7.500h15" stroke="#fff" strokeDasharray="1 1" />
            <path d="M6 9.500h9" stroke="#fff" />
          </Icon>
        </button>
        <button className="ml-[11px]">DEU</button>
        <button className="ml-[15px]">6:15 PM</button>
        <button aria-label="Notifications" className="ml-[21px]">
          <Icon w={16} h={15}>
            <path d="M0 0h16v12h-5l-3 3v-3H0z" fill="#fff" />
            <path d="M3 3.500h10M3 6h10M3 8.500h6" stroke="#452321" />
          </Icon>
        </button>
      </div>
    </footer>
  );
}

export default function App() {
  return (
    <div className="flex min-h-screen flex-col font-[Roboto,sans-serif]">
      <div className="flex flex-1">
        <div className="flex min-w-0 flex-1 flex-col border-l border-[#a9a9a9]">
          <TitleBar />
          <TabBar />
          <Ribbon />
          <Canvas />
          <Timeline />
        </div>
        <div className="flex w-[3px] flex-col border-l border-[#b5b5b5] bg-[#f1f1f1]">
          <div className="h-8 bg-[#1464ad]" />
        </div>
      </div>
      <Taskbar />
    </div>
  );
}
